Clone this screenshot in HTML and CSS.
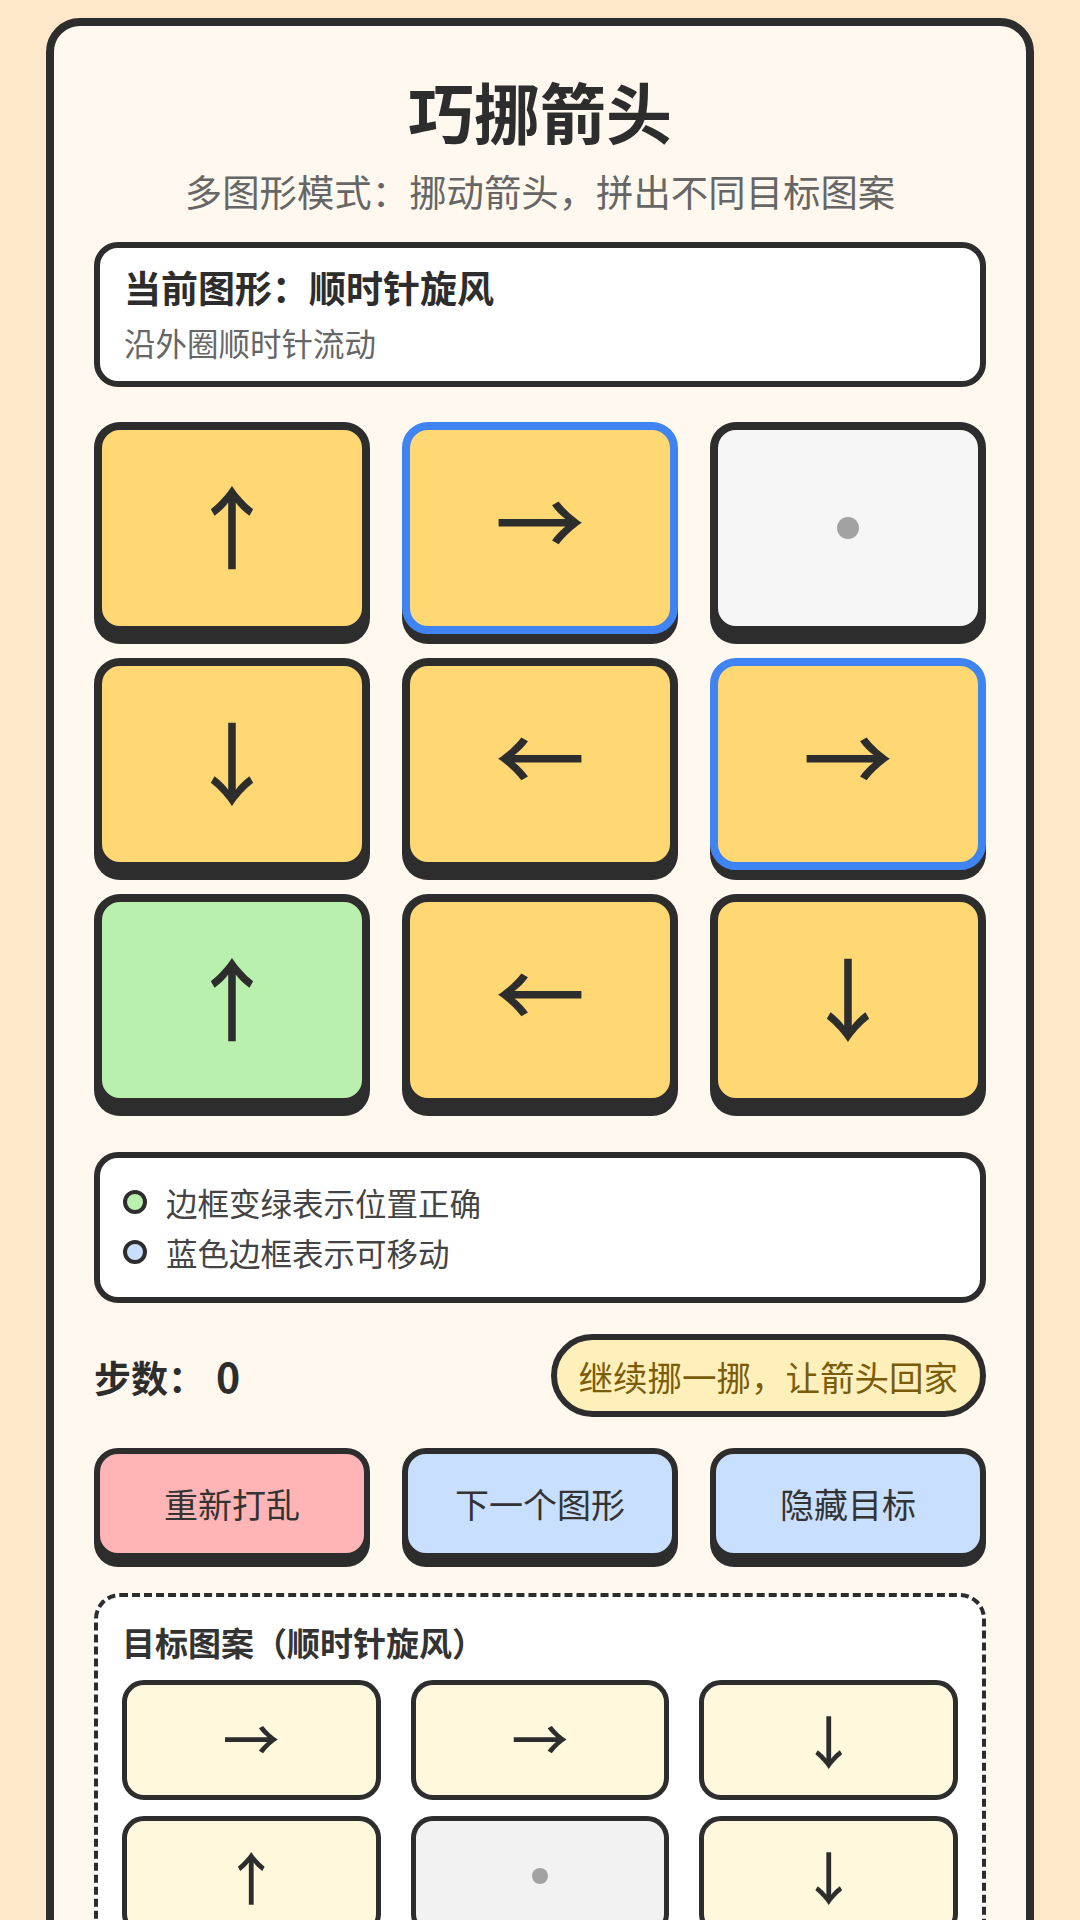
FILE: index.html
```html
<!DOCTYPE html>
<html lang="zh-CN">
<head>
<meta charset="utf-8">
<title>巧挪箭头</title>
<link rel="stylesheet" href="styles.css">
</head>
<body>
<main class="card">
  <h1 class="title">巧挪箭头</h1>
  <p class="subtitle">多图形模式：挪动箭头，拼出不同目标图案</p>

  <section class="info">
    <div class="info-title">当前图形：顺时针旋风</div>
    <div class="info-desc">沿外圈顺时针流动</div>
  </section>

  <section class="board">
    <div class="tile v">↑</div>
    <div class="tile h movable">→</div>
    <div class="tile empty"><span class="dot"></span></div>
    <div class="tile v">↓</div>
    <div class="tile h">←</div>
    <div class="tile h movable">→</div>
    <div class="tile v correct">↑</div>
    <div class="tile h">←</div>
    <div class="tile v">↓</div>
  </section>

  <section class="legend">
    <div class="legend-row"><span class="swatch green"></span>边框变绿表示位置正确</div>
    <div class="legend-row"><span class="swatch blue"></span>蓝色边框表示可移动</div>
  </section>

  <div class="status">
    <div class="steps">步数：<span class="count">0</span></div>
    <div class="pill">继续挪一挪，让箭头回家</div>
  </div>

  <div class="actions">
    <button class="btn red">重新打乱</button>
    <button class="btn blue">下一个图形</button>
    <button class="btn blue">隐藏目标</button>
  </div>

  <section class="target">
    <div class="target-title">目标图案（顺时针旋风）</div>
    <div class="mini-board">
      <div class="mini h">→</div>
      <div class="mini h">→</div>
      <div class="mini v">↓</div>
      <div class="mini v">↑</div>
      <div class="mini empty"><span class="dot small"></span></div>
      <div class="mini v">↓</div>
      <div class="mini v">↑</div>
      <div class="mini h">←</div>
      <div class="mini h">←</div>
    </div>
  </section>
</main>
</body>
</html>
```

FILE: styles.css
```css
* { box-sizing: border-box; }

html, body {
  margin: 0;
  padding: 0;
  background: #ffe8c9;
  font-family: "Noto Sans CJK SC", "Noto Sans", sans-serif;
  color: #2d2d2d;
}

body {
  padding-top: 18px;
}

.card {
  width: 988px;
  margin: 0 auto;
  background: #fff8ee;
  border: 8px solid #2d2d2d;
  border-radius: 34px;
  padding: 44px 40px 60px;
  min-height: 2000px;
}

.title {
  margin: 0;
  text-align: center;
  font-size: 66px;
  line-height: 80px;
  font-weight: 700;
  color: #2d2d2d;
}

.subtitle {
  margin: 17px 0 0;
  text-align: center;
  font-size: 37.4px;
  line-height: 48px;
  color: #666;
}

.info {
  margin-top: 27px;
  background: #fff;
  border: 6px solid #2d2d2d;
  border-radius: 24px;
  padding: 19px 24px 19px;
}

.info-title {
  font-size: 37px;
  line-height: 40px;
  font-weight: 700;
  color: #2d2d2d;
}

.info-desc {
  margin-top: 15px;
  font-size: 31.5px;
  line-height: 40px;
  color: #666;
}

.board {
  margin-top: 35px;
  display: grid;
  grid-template-columns: repeat(3, 1fr);
  column-gap: 32px;
  row-gap: 24px;
}

.tile {
  height: 212px;
  background: #ffd773;
  border: 8px solid #2d2d2d;
  border-radius: 26px;
  box-shadow: 0 10px 0 #2d2d2d;
  display: flex;
  align-items: center;
  justify-content: center;
  font-size: 90px;
  font-weight: 500;
  line-height: 1;
  color: #2d2d2d;
}
.tile.v { padding-bottom: 11px; }
.tile.h { padding-bottom: 20px; }

.tile.movable { border-color: #3f84f2; }
.tile.correct { background: #b9f0ae; }
.tile.empty { background: #f6f6f6; }

.dot {
  width: 22px;
  height: 22px;
  border-radius: 50%;
  background: #a2a2a2;
}

.legend {
  margin-top: 46px;
  background: #fff;
  border: 6px solid #2d2d2d;
  border-radius: 24px;
  padding: 24px 24px 25px 23px;
  display: flex;
  flex-direction: column;
  gap: 10px;
}

.legend-row {
  display: flex;
  align-items: center;
  font-size: 31.5px;
  line-height: 40px;
  color: #444;
}

.swatch {
  width: 24px;
  height: 24px;
  border-radius: 50%;
  border: 4px solid #2d2d2d;
  margin-right: 19px;
  flex: none;
}
.swatch.green { background: #b9f0ae; }
.swatch.blue { background: #c9dfff; }

.status {
  margin-top: 31px;
  display: flex;
  align-items: center;
  justify-content: space-between;
}

.steps {
  font-size: 37px;
  line-height: 40px;
  font-weight: 700;
  color: #2d2d2d;
}

.count {
  display: inline-block;
  margin-left: 11px;
  font-size: 41px;
}

.pill {
  height: 83px;
  padding: 0 22px;
  background: #fff0bb;
  border: 6px solid #2d2d2d;
  border-radius: 42px;
  display: flex;
  align-items: center;
  font-size: 34.5px;
  color: #7a5c0a;
}

.actions {
  margin-top: 31px;
  display: grid;
  grid-template-columns: repeat(3, 1fr);
  column-gap: 32px;
}

.btn {
  height: 111px;
  border: 6px solid #2d2d2d;
  border-radius: 24px;
  box-shadow: 0 8px 0 #2d2d2d;
  font-family: "Noto Sans CJK SC", "Noto Sans", sans-serif;
  font-size: 34px;
  color: #333;
  padding: 0;
}
.btn.red { background: #ffb5b5; }
.btn.blue { background: #c9dfff; }

.target {
  margin-top: 34px;
  background: #fff;
  border: 4px dashed #2d2d2d;
  border-radius: 26px;
  padding: 25px 24px 24px;
}

.target-title {
  font-size: 33px;
  line-height: 40px;
  font-weight: 700;
  color: #333;
}

.mini-board {
  margin-top: 18px;
  display: grid;
  grid-template-columns: repeat(3, 1fr);
  column-gap: 30px;
  row-gap: 16px;
}

.mini {
  height: 120px;
  background: #fff8dc;
  border: 5px solid #2d2d2d;
  border-radius: 22px;
  display: flex;
  align-items: center;
  justify-content: center;
  font-size: 57px;
  font-weight: 500;
  line-height: 1;
  color: #2d2d2d;
}
.mini.v { padding-bottom: 1px; }
.mini.h { padding-bottom: 7px; }
.mini.empty { background: #f2f2f2; }
.dot.small { width: 16px; height: 16px; }
```
